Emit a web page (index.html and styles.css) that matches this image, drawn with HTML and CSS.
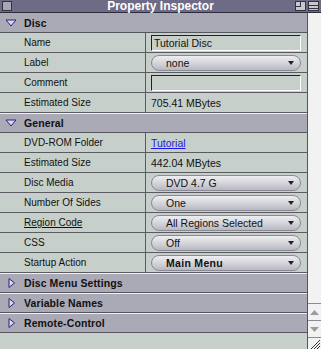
FILE: index.html
```html
<!DOCTYPE html>
<html lang="en">
<head>
    <meta charset="UTF-8">
    <title>Property Inspector</title>
    <link rel="stylesheet" href="styles.css">
</head>
<body>

<div class="window">
    <div class="titlebar">
        <span class="closebox"></span>
        <span class="title">Property Inspector</span>
        <span class="widgets"><span class="zoombox"></span><span class="shadebox"></span></span>
    </div>

    <div class="frame">
        <div class="content">
            <div class="section-head open">
                <svg class="tri" width="12" height="8" viewBox="0 0 12 8"><path d="M1 1 H11 L6 7 Z" fill="#d8d6f0" stroke="#2a2470" stroke-width="1"/></svg>
                <span>Disc</span>
            </div>
            <div class="row"><div class="key">Name</div><div class="val"><div class="field">Tutorial Disc</div></div></div>
            <div class="row"><div class="key">Label</div><div class="val"><div class="popup">none</div></div></div>
            <div class="row"><div class="key">Comment</div><div class="val"><div class="field"></div></div></div>
            <div class="row"><div class="key">Estimated Size</div><div class="val">705.41 MBytes</div></div>

            <div class="section-head open">
                <svg class="tri" width="12" height="8" viewBox="0 0 12 8"><path d="M1 1 H11 L6 7 Z" fill="#d8d6f0" stroke="#2a2470" stroke-width="1"/></svg>
                <span>General</span>
            </div>
            <div class="row"><div class="key">DVD-ROM Folder</div><div class="val"><a class="link" href="#">Tutorial</a></div></div>
            <div class="row"><div class="key">Estimated Size</div><div class="val">442.04 MBytes</div></div>
            <div class="row"><div class="key">Disc Media</div><div class="val"><div class="popup">DVD 4.7 G</div></div></div>
            <div class="row"><div class="key">Number Of Sides</div><div class="val"><div class="popup">One</div></div></div>
            <div class="row"><div class="key"><u>Region Code</u></div><div class="val"><div class="popup">All Regions Selected</div></div></div>
            <div class="row"><div class="key">CSS</div><div class="val"><div class="popup">Off</div></div></div>
            <div class="row"><div class="key">Startup Action</div><div class="val"><div class="popup bold">Main Menu</div></div></div>

            <div class="section-head">
                <svg class="tri" width="12" height="10" viewBox="0 0 12 10"><path d="M4 0.5 V9.5 L9.5 5 Z" fill="#d8d6f0" stroke="#2a2470" stroke-width="1"/></svg>
                <span>Disc Menu Settings</span>
            </div>
            <div class="section-head">
                <svg class="tri" width="12" height="10" viewBox="0 0 12 10"><path d="M4 0.5 V9.5 L9.5 5 Z" fill="#d8d6f0" stroke="#2a2470" stroke-width="1"/></svg>
                <span>Variable Names</span>
            </div>
            <div class="section-head">
                <svg class="tri" width="12" height="10" viewBox="0 0 12 10"><path d="M4 0.5 V9.5 L9.5 5 Z" fill="#d8d6f0" stroke="#2a2470" stroke-width="1"/></svg>
                <span>Remote-Control</span>
            </div>
            <div class="filler"></div>
        </div>

        <div class="scrollbar">
            <div class="track"></div>
            <div class="arrow"><svg width="9" height="5" viewBox="0 0 9 5"><path d="M0 5 L4.5 0 L9 5 Z" fill="#9a9aa4"/></svg></div>
            <div class="arrow"><svg width="9" height="5" viewBox="0 0 9 5"><path d="M0 0 L4.5 5 L9 0 Z" fill="#9a9aa4"/></svg></div>
            <div class="grow">
                <svg width="11" height="10" viewBox="0 0 11 10"><path d="M10 1 L1 10 M10 4 L4 10 M10 7 L7 10" stroke="#333" stroke-width="1"/></svg>
            </div>
        </div>
    </div>
</div>

</body>
</html>
```

FILE: styles.css
```css
body {
    margin: 0;
    font-family: "Liberation Sans", Arial, sans-serif;
    font-size: 10.5px;
    color: #111;
}

.window {
    width: 321px;
    height: 349px;
    display: flex;
    flex-direction: column;
    background: #c8d0cc;
    overflow: hidden;
}

.titlebar {
    height: 12px;
    background: #6e6b86;
    display: flex;
    align-items: center;
    border-bottom: 1px solid #2c2c3a;
}

.closebox {
    width: 8px;
    height: 8px;
    margin-left: 2px;
    background: #a8a8b4;
    border: 1px solid #33333e;
}

.title {
    flex: 1;
    text-align: center;
    color: #fff;
    font-weight: bold;
    font-size: 12px;
    line-height: 12px;
    padding-left: 14px;
}

.widgets {
    display: flex;
    gap: 2px;
    margin-right: 2px;
}

.zoombox, .shadebox {
    width: 9px;
    height: 8px;
    background: #c8c8d0;
    border: 1px solid #33333e;
    position: relative;
}

.zoombox::after {
    content: "";
    position: absolute;
    left: 0;
    top: 0;
    width: 4px;
    height: 4px;
    border-right: 1px solid #33333e;
    border-bottom: 1px solid #33333e;
}

.shadebox::after {
    content: "";
    position: absolute;
    left: 0;
    right: 0;
    top: 3px;
    height: 2px;
    border-top: 1px solid #33333e;
    border-bottom: 1px solid #33333e;
}

.frame {
    flex: 1;
    display: flex;
}

.content {
    flex: 1;
    display: flex;
    flex-direction: column;
}

.section-head {
    height: 18px;
    display: flex;
    align-items: center;
    background: #aaa9b6;
    border-top: 1px solid #f0f0f4;
    border-bottom: 1px solid #55555e;
    font-weight: bold;
    font-size: 10.5px;
    letter-spacing: 0.1px;
}

.section-head:first-child {
    border-top: none;
    height: 19px;
}

.section-head .tri {
    margin-left: 5px;
    margin-right: 7px;
}

.row {
    height: 19px;
    display: flex;
    border-bottom: 1px solid #5a5a60;
    background: #c6cfca;
}

.key {
    width: 121px;
    padding-left: 24px;
    display: flex;
    align-items: center;
    font-size: 10px;
    border-right: 1px solid #5a5a60;
}

.val {
    flex: 1;
    display: flex;
    align-items: center;
    padding-left: 5px;
    padding-right: 6px;
}

.field {
    flex: 1;
    height: 14px;
    line-height: 14px;
    padding-left: 2px;
    background: #c6cfca;
    border-top: 1px solid #222;
    border-left: 1px solid #222;
    border-right: 1px solid #fff;
    border-bottom: 1px solid #fff;
}

.popup {
    flex: 1;
    height: 14px;
    line-height: 14px;
    padding-left: 14px;
    border: 1px solid #8a8a94;
    border-radius: 8px;
    background: linear-gradient(#eeeef2, #cfcfd6 60%, #b8b8c2);
    position: relative;
}

.popup::after {
    content: "";
    position: absolute;
    right: 6px;
    top: 5px;
    border-left: 3px solid transparent;
    border-right: 3px solid transparent;
    border-top: 4px solid #222;
}

.popup.bold {
    font-weight: bold;
    letter-spacing: 0.3px;
}

.link {
    color: #1a1ae0;
    text-decoration: underline;
}

.filler {
    flex: 1;
    background: #c8d0cc;
}

.scrollbar {
    width: 13px;
    display: flex;
    flex-direction: column;
    border-left: 1px solid #55555e;
    background: #f2f2f2;
}

.track {
    flex: 1;
}

.arrow {
    height: 16px;
    display: flex;
    align-items: center;
    justify-content: center;
    border-top: 1px solid #8a8a90;
}

.grow {
    height: 11px;
    border-top: 1px solid #8a8a90;
    display: flex;
    align-items: flex-end;
    justify-content: flex-end;
}
```
